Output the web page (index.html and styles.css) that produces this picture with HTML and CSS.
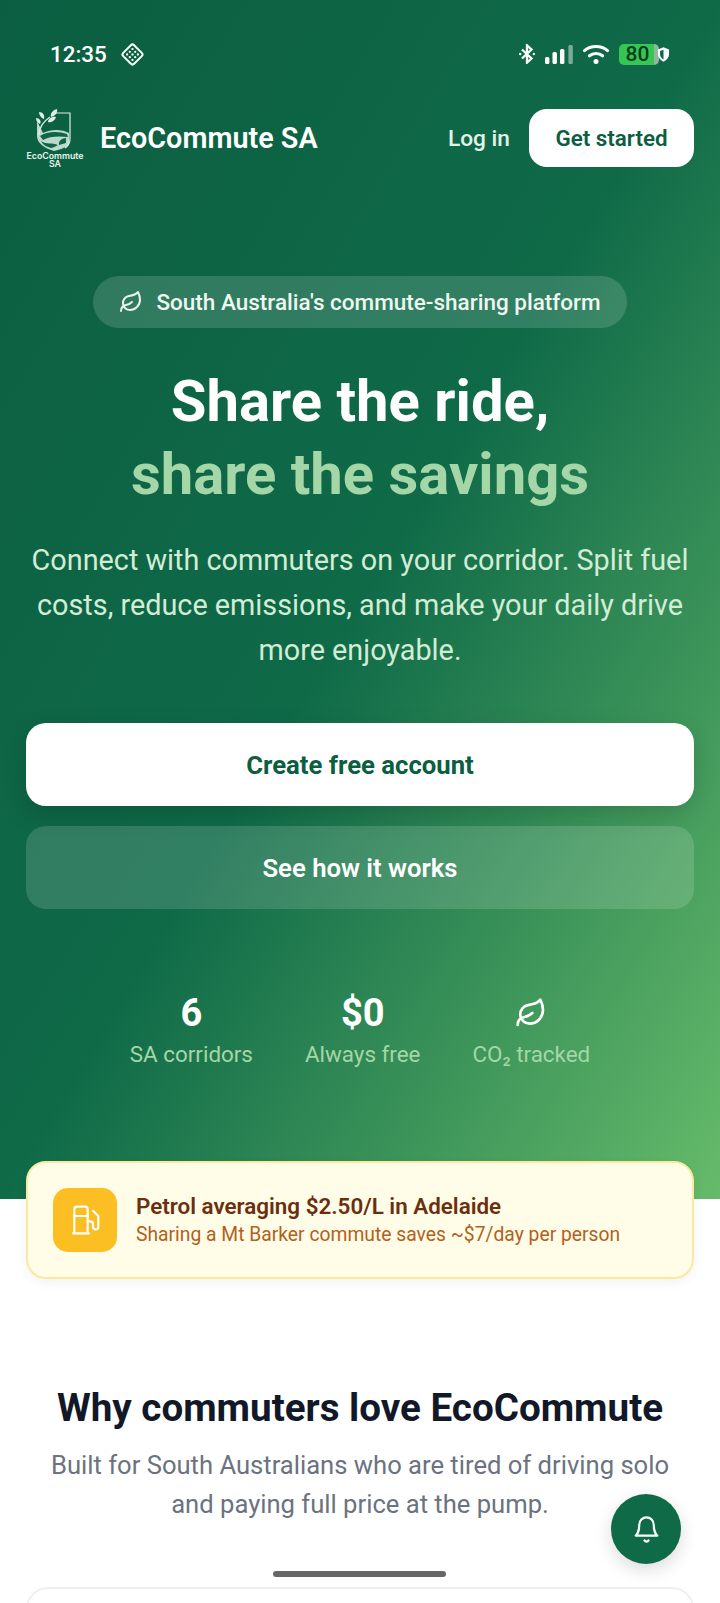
FILE: index.html
```html
<!DOCTYPE html>
<html lang="en">
<head>
<meta charset="utf-8">
<title>EcoCommute SA</title>
<link rel="stylesheet" href="styles.css">
</head>
<body>
<div class="page">
  <section class="hero">
    <div class="status">
      <div class="status-left">
        <span class="time">12:35</span>
        <svg class="diamond" viewBox="0 0 24 24" fill="none" stroke="#fff" stroke-width="1.9"><rect x="4.600" y="4.600" width="14.800" height="14.800" rx="2.200" transform="rotate(45 12 12)"/><g fill="#fff" stroke="none"><circle cx="12" cy="6.800" r="1.100"/><circle cx="9.400" cy="9.400" r="1.100"/><circle cx="14.600" cy="9.400" r="1.100"/><circle cx="6.800" cy="12" r="1.100"/><circle cx="12" cy="12" r="1.100"/><circle cx="17.200" cy="12" r="1.100"/><circle cx="9.400" cy="14.600" r="1.100"/><circle cx="14.600" cy="14.600" r="1.100"/><circle cx="12" cy="17.200" r="1.100"/></g></svg>
      </div>
      <div class="status-right">
        <svg class="bt" viewBox="0 0 16 20" fill="none" stroke="#fff" stroke-width="2.300"><path d="M3 5.500l9.500 9L8 18.600V1.400l4.500 4.100L3 14.500"/><circle cx="1.200" cy="10" r="1.200" fill="#fff" stroke="none"/><circle cx="14.800" cy="10" r="1.200" fill="#fff" stroke="none"/></svg>
        <svg class="signal" viewBox="0 0 28 19"><rect x="0" y="12" width="4.400" height="7" rx="1.500" fill="#fff"/><rect x="7.500" y="7" width="4.400" height="12" rx="1.500" fill="#fff"/><rect x="15" y="4" width="4.400" height="15" rx="1.500" fill="#fff"/><rect x="23.400" y="0" width="4.400" height="19" rx="1.500" fill="#fff" opacity=".45"/></svg>
        <svg class="wifi" viewBox="0 0 28 20" fill="none" stroke="#fff" stroke-width="3" stroke-linecap="round"><path d="M2.400 6.600c6.600-5.400 16.600-5.400 23.200 0"/><path d="M7.400 11.800c3.800-3 9.400-3 13.200 0"/><circle cx="14" cy="17.400" r="2.500" fill="#fff" stroke="none"/></svg>
        <div class="battery"><span class="battery-num">80</span></div>
        <svg class="guard" viewBox="0 0 14 17"><path d="M7 .8l6 2.200v5c0 3.800-2.500 6.700-6 8.200-3.500-1.500-6-4.400-6-8.200V3z" fill="#fff"/><path d="M7 3.400v10.400c-2.300-1.200-3.700-3.200-3.700-5.800V4.700z" fill="#0d6646"/></svg>
      </div>
    </div>

    <nav class="nav">
      <div class="brand">
        <div class="logo">
          <svg class="logo-mark" viewBox="0 0 36 42" fill="none">
            <path d="M17 4H35V30C35 34 33 37 30 39" stroke="#dcefe4" stroke-width="1.200"/>
            <path d="M2 12V27C2 34 9 39 19 42C24 41 30 39 34 36V24C27 20 16 20 8 24" fill="#dcefe4" opacity=".85"/>
            <path d="M5 27C12 22 24 22 32 25L33 28C25 27 14 27 8 31Z" fill="#0d6646"/>
            <path d="M6 32C12 36 17 33 23 36C20 38 17 39 16 39C12 38 8 36 6 32Z" fill="#0d6646"/>
            <path d="M24 36C23 32 27 29 31 29V34Z" fill="#0d6646"/>
            <path d="M4 26C4 18 9 12 15 8" stroke="#dcefe4" stroke-width="1.300"/>
            <path d="M16 8C15 4 18 1 22 0C23 4 20 7 16 8Z M9 10C6 9 4 6 4 3C8 3 10 6 9 10Z M13 13C13 10 17 7 21 8C20 12 16 14 13 13Z M5 15C2 14 1 11 1 9C4 9 7 12 5 15Z" fill="#dcefe4"/>
          </svg>
          <div class="logo-text">EcoCommute<br>SA</div>
        </div>
        <span class="brand-name">EcoCommute SA</span>
      </div>
      <div class="nav-actions">
        <span class="login">Log in</span>
        <span class="get-started">Get started</span>
      </div>
    </nav>

    <div class="pill">
      <svg class="pill-leaf" viewBox="0 0 24 24" fill="none" stroke="#e6f4ea" stroke-width="2" stroke-linecap="round" stroke-linejoin="round"><path d="M11 20A7 7 0 0 1 9.800 6.100C15.500 5 17 4.480 19 2c1 2 2 4.180 2 8 0 5.500-4.780 10-10 10Z"/><path d="M2 21c0-3 1.850-5.360 5.080-6C9.500 14.520 12 13 13 12"/></svg>
      <span>South Australia's commute-sharing platform</span>
    </div>

    <h1 class="title">Share the ride,<br><span class="title-accent">share the savings</span></h1>
    <p class="lead">Connect with commuters on your corridor. Split fuel costs, reduce emissions, and make your daily drive more enjoyable.</p>

    <div class="cta cta-primary">Create free account</div>
    <div class="cta cta-secondary">See how it works</div>

    <div class="stats">
      <div class="stat">
        <div class="stat-value">6</div>
        <div class="stat-label">SA corridors</div>
      </div>
      <div class="stat">
        <div class="stat-value">$0</div>
        <div class="stat-label">Always free</div>
      </div>
      <div class="stat">
        <div class="stat-value">
          <svg class="stat-leaf" viewBox="0 0 24 24" fill="none" stroke="#fff" stroke-width="2" stroke-linecap="round" stroke-linejoin="round"><path d="M11 20A7 7 0 0 1 9.800 6.100C15.500 5 17 4.480 19 2c1 2 2 4.180 2 8 0 5.500-4.780 10-10 10Z"/><path d="M2 21c0-3 1.850-5.360 5.080-6C9.500 14.520 12 13 13 12"/></svg>
        </div>
        <div class="stat-label">CO₂ tracked</div>
      </div>
    </div>
  </section>

  <section class="fuel-card">
    <div class="fuel-icon">
      <svg viewBox="0 0 24 24" fill="none" stroke="#fff" stroke-width="1.600" stroke-linecap="round" stroke-linejoin="round"><line x1="3" y1="22" x2="15" y2="22"/><line x1="4" y1="9" x2="14" y2="9"/><path d="M14 22V4a2 2 0 0 0-2-2H6a2 2 0 0 0-2 2v18"/><path d="M14 13h2a2 2 0 0 1 2 2v2a2 2 0 0 0 2 2h0a2 2 0 0 0 2-2V9.830a2 2 0 0 0-.59-1.420L18 5"/></svg>
    </div>
    <div class="fuel-text">
      <div class="fuel-title">Petrol averaging $2.50/L in Adelaide</div>
      <div class="fuel-sub">Sharing a Mt Barker commute saves ~$7/day per person</div>
    </div>
  </section>

  <section class="why">
    <h2 class="why-title">Why commuters love EcoCommute</h2>
    <p class="why-text">Built for South Australians who are tired of driving solo and paying full price at the pump.</p>
  </section>

  <div class="next-card"></div>

  <div class="fab">
    <svg viewBox="0 0 24 24" fill="none" stroke="#fff" stroke-width="1.800" stroke-linecap="round" stroke-linejoin="round"><path d="M6 8a6 6 0 0 1 12 0c0 7 3 9 3 9H3s3-2 3-9"/><path d="M10.300 21a1.940 1.940 0 0 0 3.400 0"/></svg>
  </div>
  <div class="home-indicator"></div>
</div>
</body>
</html>
```
FILE: styles.css
```css
* { box-sizing: border-box; }
html, body { margin: 0; padding: 0; }
body { font-family: Roboto, "Noto Sans", sans-serif; background: #fff; }
.page { position: relative; width: 720px; height: 1603px; overflow: hidden; background: #fff; }

.hero {
  height: 1199px;
  padding: 0 26px;
  background: linear-gradient(121deg, #0b5e41 0%, #0f6a48 50%, #66bb6a 100%);
  color: #fff;
}

.status { height: 109px; display: flex; justify-content: space-between; align-items: flex-start; padding: 43px 24px 0 24px; }
.status-left { display: flex; align-items: center; gap: 13px; height: 22px; }
.time { font-size: 22.400px; font-weight: 500; line-height: 22px; }
.diamond { width: 25px; height: 25px; }
.status-right { display: flex; align-items: center; height: 22px; }
.bt { width: 16px; height: 20px; margin-right: 10px; }
.signal { width: 28px; height: 19px; margin-right: 9px; }
.wifi { width: 28px; height: 20px; margin-right: 9px; }
.battery { width: 40px; height: 21px; border-radius: 5px; background: linear-gradient(90deg, #35c653 0 88%, #8fb7a0 88%); display: flex; align-items: center; justify-content: center; }
.battery-num { font-size: 21px; font-weight: 500; color: #0a3d20; line-height: 21px; padding-right: 3px; }
.guard { width: 13px; height: 17px; margin-left: -2px; }

.nav { height: 58px; display: flex; justify-content: space-between; align-items: center; }
.brand { display: flex; align-items: center; gap: 15px; }
.logo { width: 60px; display: flex; flex-direction: column; align-items: center; margin-left: -1px; }
.logo-mark { width: 36px; height: 42px; margin-left: -5px; }
.logo-text { font-family: Inter, sans-serif; font-size: 8.800px; font-weight: 600; line-height: 7.500px; text-align: center; color: #e8f5ee; margin-top: 1px; }
.brand-name { font-size: 28.800px; font-weight: 600; }
.nav-actions { display: flex; align-items: center; gap: 19px; }
.login { font-size: 22.700px; font-weight: 500; color: #e1f3e6; }
.get-started { width: 165px; height: 58px; border-radius: 18px; background: #fff; color: #0b5e41; font-size: 22.400px; font-weight: 600; display: flex; align-items: center; justify-content: center; }

.pill { width: 534px; height: 52px; margin: 109px auto 0; border-radius: 26px; background: rgba(255,255,255,.15); display: flex; align-items: center; justify-content: center; gap: 13px; font-size: 22.500px; font-weight: 500; color: #eef8f1; }
.pill-leaf { width: 24px; height: 24px; }

.title { margin: 37px 0 0; text-align: center; font-size: 58px; line-height: 73px; font-weight: 700; color: #fff; }
.title-accent { color: #a5d6a7; }

.lead { margin: 27px 0 0; text-align: center; font-size: 28.800px; line-height: 45px; font-weight: 400; color: #d3ecd6; }

.cta { height: 83px; border-radius: 20px; display: flex; align-items: center; justify-content: center; font-size: 25.700px; font-weight: 700; }
.cta-primary { margin-top: 50px; background: #fff; color: #0b5e41; box-shadow: 0 8px 24px rgba(0,0,0,.15); }
.cta-secondary { margin-top: 20px; background: rgba(255,255,255,.15); color: #fff; font-weight: 600; }

.stats { margin-top: 78px; display: flex; justify-content: center; gap: 52px; }
.stat { display: flex; flex-direction: column; align-items: center; }
.stat-value { height: 52px; font-size: 38px; line-height: 52px; font-weight: 700; color: #fff; display: flex; align-items: center; justify-content: center; }
.stat-leaf { width: 32px; height: 32px; }
.stat-label { font-size: 22.400px; line-height: 30px; color: #a5d6a7; }

.fuel-card { position: relative; height: 118px; margin: -38px 26px 0; padding: 0 25px; border: 2px solid #fbe9a0; border-radius: 20px; background: #fffde7; box-shadow: 0 4px 12px rgba(0,0,0,.05); display: flex; align-items: center; gap: 19px; }
.fuel-icon { width: 64px; height: 64px; flex: none; border-radius: 15px; background: #fbbf24; display: flex; align-items: center; justify-content: center; }
.fuel-icon svg { width: 32px; height: 32px; }
.fuel-title { font-size: 22.400px; line-height: 30px; font-weight: 600; color: #6b2f10; }
.fuel-sub { font-size: 19.300px; line-height: 28px; color: #b45f1c; }

.why { margin-top: 104px; padding: 0 36px; text-align: center; }
.why-title { margin: 0 -10px; font-size: 38.600px; line-height: 50px; font-weight: 700; color: #111827; }
.why-text { margin: 13px 0 0; font-size: 25.600px; line-height: 39px; color: #6b7280; }

.next-card { height: 100px; margin: 63px 26px 0; border: 2px solid #eeeeee; border-radius: 22px; background: #fff; }

.fab { position: absolute; left: 611px; top: 1494px; width: 70px; height: 70px; border-radius: 50%; background: #0f6a48; box-shadow: 0 6px 18px rgba(0,0,0,.14); display: flex; align-items: center; justify-content: center; }
.fab svg { width: 29px; height: 29px; }
.home-indicator { position: absolute; left: 273px; top: 1571px; width: 173px; height: 6px; border-radius: 3px; background: #666; }
```
